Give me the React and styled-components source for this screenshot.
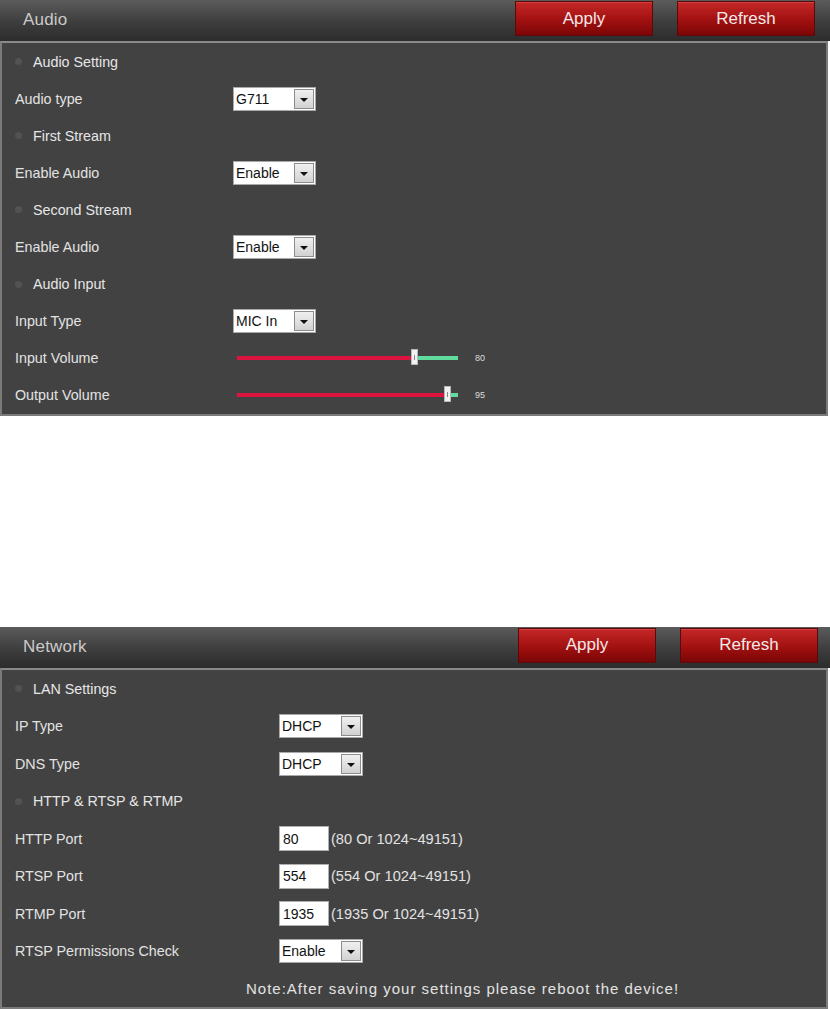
import React from 'react';
import styled, { createGlobalStyle } from 'styled-components';

const GlobalStyle = createGlobalStyle`
    body {
        margin: 0;
        background: #ffffff;
        font-family: "Liberation Sans", Arial, sans-serif;
    }
`

const Page = styled.div`
    width: 830px;
    display: flex;
    flex-direction: column;
    gap: 211px;
`

const Panel = styled.section`
    display: flex;
    flex-direction: column;
`

const Header = styled.div`
    height: 41px;
    display: flex;
    align-items: flex-start;
    justify-content: space-between;
    padding: 1px ${p => p.$right}px 0 23px;
    box-sizing: border-box;
    background: linear-gradient(to bottom, #5b5b5b 0%, #3d3d3d 55%, #2c2c2c 100%);
`

const Title = styled.h2`
    margin: 0;
    padding-top: 9px;
    font-size: 17px;
    font-weight: normal;
    color: #cacaca;
    letter-spacing: 0.2px;
`

const Buttons = styled.div`
    display: flex;
    gap: 24px;
`

const Button = styled.button`
    width: 138px;
    height: 35px;
    border: 1px solid #5a0a0a;
    box-shadow: inset 0 1px 0 #d84040;
    background: linear-gradient(to bottom, #c42828 0%, #a51212 50%, #7c0505 100%);
    color: #f3e8e8;
    font-family: "Liberation Sans", Arial, sans-serif;
    font-size: 17px;
    padding: 0;
    cursor: pointer;
`

const Body = styled.div`
    width: 828px;
    box-sizing: border-box;
    background: #424242;
    border: 2px solid #7b7b7b;
    border-top-color: #8a8a8a;
    display: grid;
    grid-auto-rows: ${p => p.$rowH}px;
`

const Row = styled.div`
    display: grid;
    grid-template-columns: ${p => p.$labelW}px 1fr;
    align-items: center;
    padding-left: 13px;
    color: #e2e2e2;
    font-size: 14.3px;
`

const SectionRow = styled.div`
    display: flex;
    align-items: center;
    padding-left: 13px;
    color: #e6e6e6;
    font-size: 14.3px;
`

const Bullet = styled.span`
    width: 7px;
    height: 7px;
    border-radius: 50%;
    background: #525252;
    margin-right: 11px;
`

const Label = styled.span``

const Control = styled.div`
    display: flex;
    align-items: center;
`

const SelectBox = styled.div`
    width: ${p => p.$w}px;
    height: 24px;
    box-sizing: border-box;
    background: #ffffff;
    border: 1px solid #a9a9a9;
    display: flex;
    align-items: center;
    justify-content: space-between;
    padding: 1px 1px 1px 2px;
    color: #111;
    font-size: 14px;
`

const Arrow = styled.span`
    width: 20px;
    height: 20px;
    box-sizing: border-box;
    background: linear-gradient(to bottom, #f0f0f0, #d2d2d2);
    border: 1px solid #8c8c8c;
    display: flex;
    align-items: center;
    justify-content: center;

    &::after {
        content: '';
        border-left: 4px solid transparent;
        border-right: 4px solid transparent;
        border-top: 4px solid #111;
        margin-top: 2px;
    }
`

const TextInput = styled.div`
    width: 50px;
    height: 25px;
    box-sizing: border-box;
    background: #ffffff;
    border: 1px solid #b0b0b0;
    padding-left: 3px;
    display: flex;
    align-items: center;
    color: #111;
    font-size: 14px;
`

const Hint = styled.span`
    margin-left: 2px;
    color: #e2e2e2;
    font-size: 14.6px;
`

const SliderWrap = styled.div`
    display: flex;
    align-items: center;
    padding-left: 4px;
`

const Track = styled.div`
    position: relative;
    width: 221px;
    height: 4px;
    background: #62dc9e;
`

const Fill = styled.div`
    height: 100%;
    background: #dc1440;
`

const Thumb = styled.span`
    position: absolute;
    top: -7px;
    width: 7px;
    height: 16px;
    margin-left: -3px;
    box-sizing: border-box;
    background: #f2f2f2;
    border: 1px solid #b8b8b8;

    &::after {
        content: '';
        position: absolute;
        left: 2px;
        top: 5px;
        width: 1px;
        height: 5px;
        background: #888;
    }
`

const SliderValue = styled.span`
    margin-left: 17px;
    font-size: 9px;
    color: #dddddd;
`

const Note = styled.div`
    display: flex;
    align-items: center;
    padding-left: ${p => p.$indent}px;
    color: #e2e2e2;
    font-size: 15px;
    letter-spacing: 1px;
`

const Select = ({ value, w }) => (
    <SelectBox $w={w}>
        <span>{value}</span>
        <Arrow />
    </SelectBox>
)

const Slider = ({ value }) => (
    <SliderWrap>
        <Track>
            <Fill style={{ width: `${value}%` }} />
            <Thumb style={{ left: `${value}%` }} />
        </Track>
        <SliderValue>{value}</SliderValue>
    </SliderWrap>
)

const PanelHeader = ({ title, right }) => (
    <Header $right={right}>
        <Title>{title}</Title>
        <Buttons>
            <Button>Apply</Button>
            <Button>Refresh</Button>
        </Buttons>
    </Header>
)

const Section = ({ children }) => (
    <SectionRow>
        <Bullet />
        {children}
    </SectionRow>
)

const App = () => {
    return (
        <>
            <GlobalStyle />
            <Page>
                <Panel>
                    <PanelHeader title='Audio' right={15} />
                    <Body $rowH={37.1}>
                        <Section>Audio Setting</Section>
                        <Row $labelW={218}>
                            <Label>Audio type</Label>
                            <Control><Select value='G711' w={83} /></Control>
                        </Row>
                        <Section>First Stream</Section>
                        <Row $labelW={218}>
                            <Label>Enable Audio</Label>
                            <Control><Select value='Enable' w={83} /></Control>
                        </Row>
                        <Section>Second Stream</Section>
                        <Row $labelW={218}>
                            <Label>Enable Audio</Label>
                            <Control><Select value='Enable' w={83} /></Control>
                        </Row>
                        <Section>Audio Input</Section>
                        <Row $labelW={218}>
                            <Label>Input Type</Label>
                            <Control><Select value='MIC In' w={83} /></Control>
                        </Row>
                        <Row $labelW={218}>
                            <Label>Input Volume</Label>
                            <Slider value={80} />
                        </Row>
                        <Row $labelW={218}>
                            <Label>Output Volume</Label>
                            <Slider value={95} />
                        </Row>
                    </Body>
                </Panel>

                <Panel>
                    <PanelHeader title='Network' right={12} />
                    <Body $rowH={37.5}>
                        <Section>LAN Settings</Section>
                        <Row $labelW={264}>
                            <Label>IP Type</Label>
                            <Control><Select value='DHCP' w={84} /></Control>
                        </Row>
                        <Row $labelW={264}>
                            <Label>DNS Type</Label>
                            <Control><Select value='DHCP' w={84} /></Control>
                        </Row>
                        <Section>HTTP &amp; RTSP &amp; RTMP</Section>
                        <Row $labelW={264}>
                            <Label>HTTP Port</Label>
                            <Control><TextInput>80</TextInput><Hint>(80 Or 1024~49151)</Hint></Control>
                        </Row>
                        <Row $labelW={264}>
                            <Label>RTSP Port</Label>
                            <Control><TextInput>554</TextInput><Hint>(554 Or 1024~49151)</Hint></Control>
                        </Row>
                        <Row $labelW={264}>
                            <Label>RTMP Port</Label>
                            <Control><TextInput>1935</TextInput><Hint>(1935 Or 1024~49151)</Hint></Control>
                        </Row>
                        <Row $labelW={264}>
                            <Label>RTSP Permissions Check</Label>
                            <Control><Select value='Enable' w={84} /></Control>
                        </Row>
                        <Note $indent={244}>Note:After saving your settings please reboot the device!</Note>
                    </Body>
                </Panel>
            </Page>
        </>
    )
}

export default App;
